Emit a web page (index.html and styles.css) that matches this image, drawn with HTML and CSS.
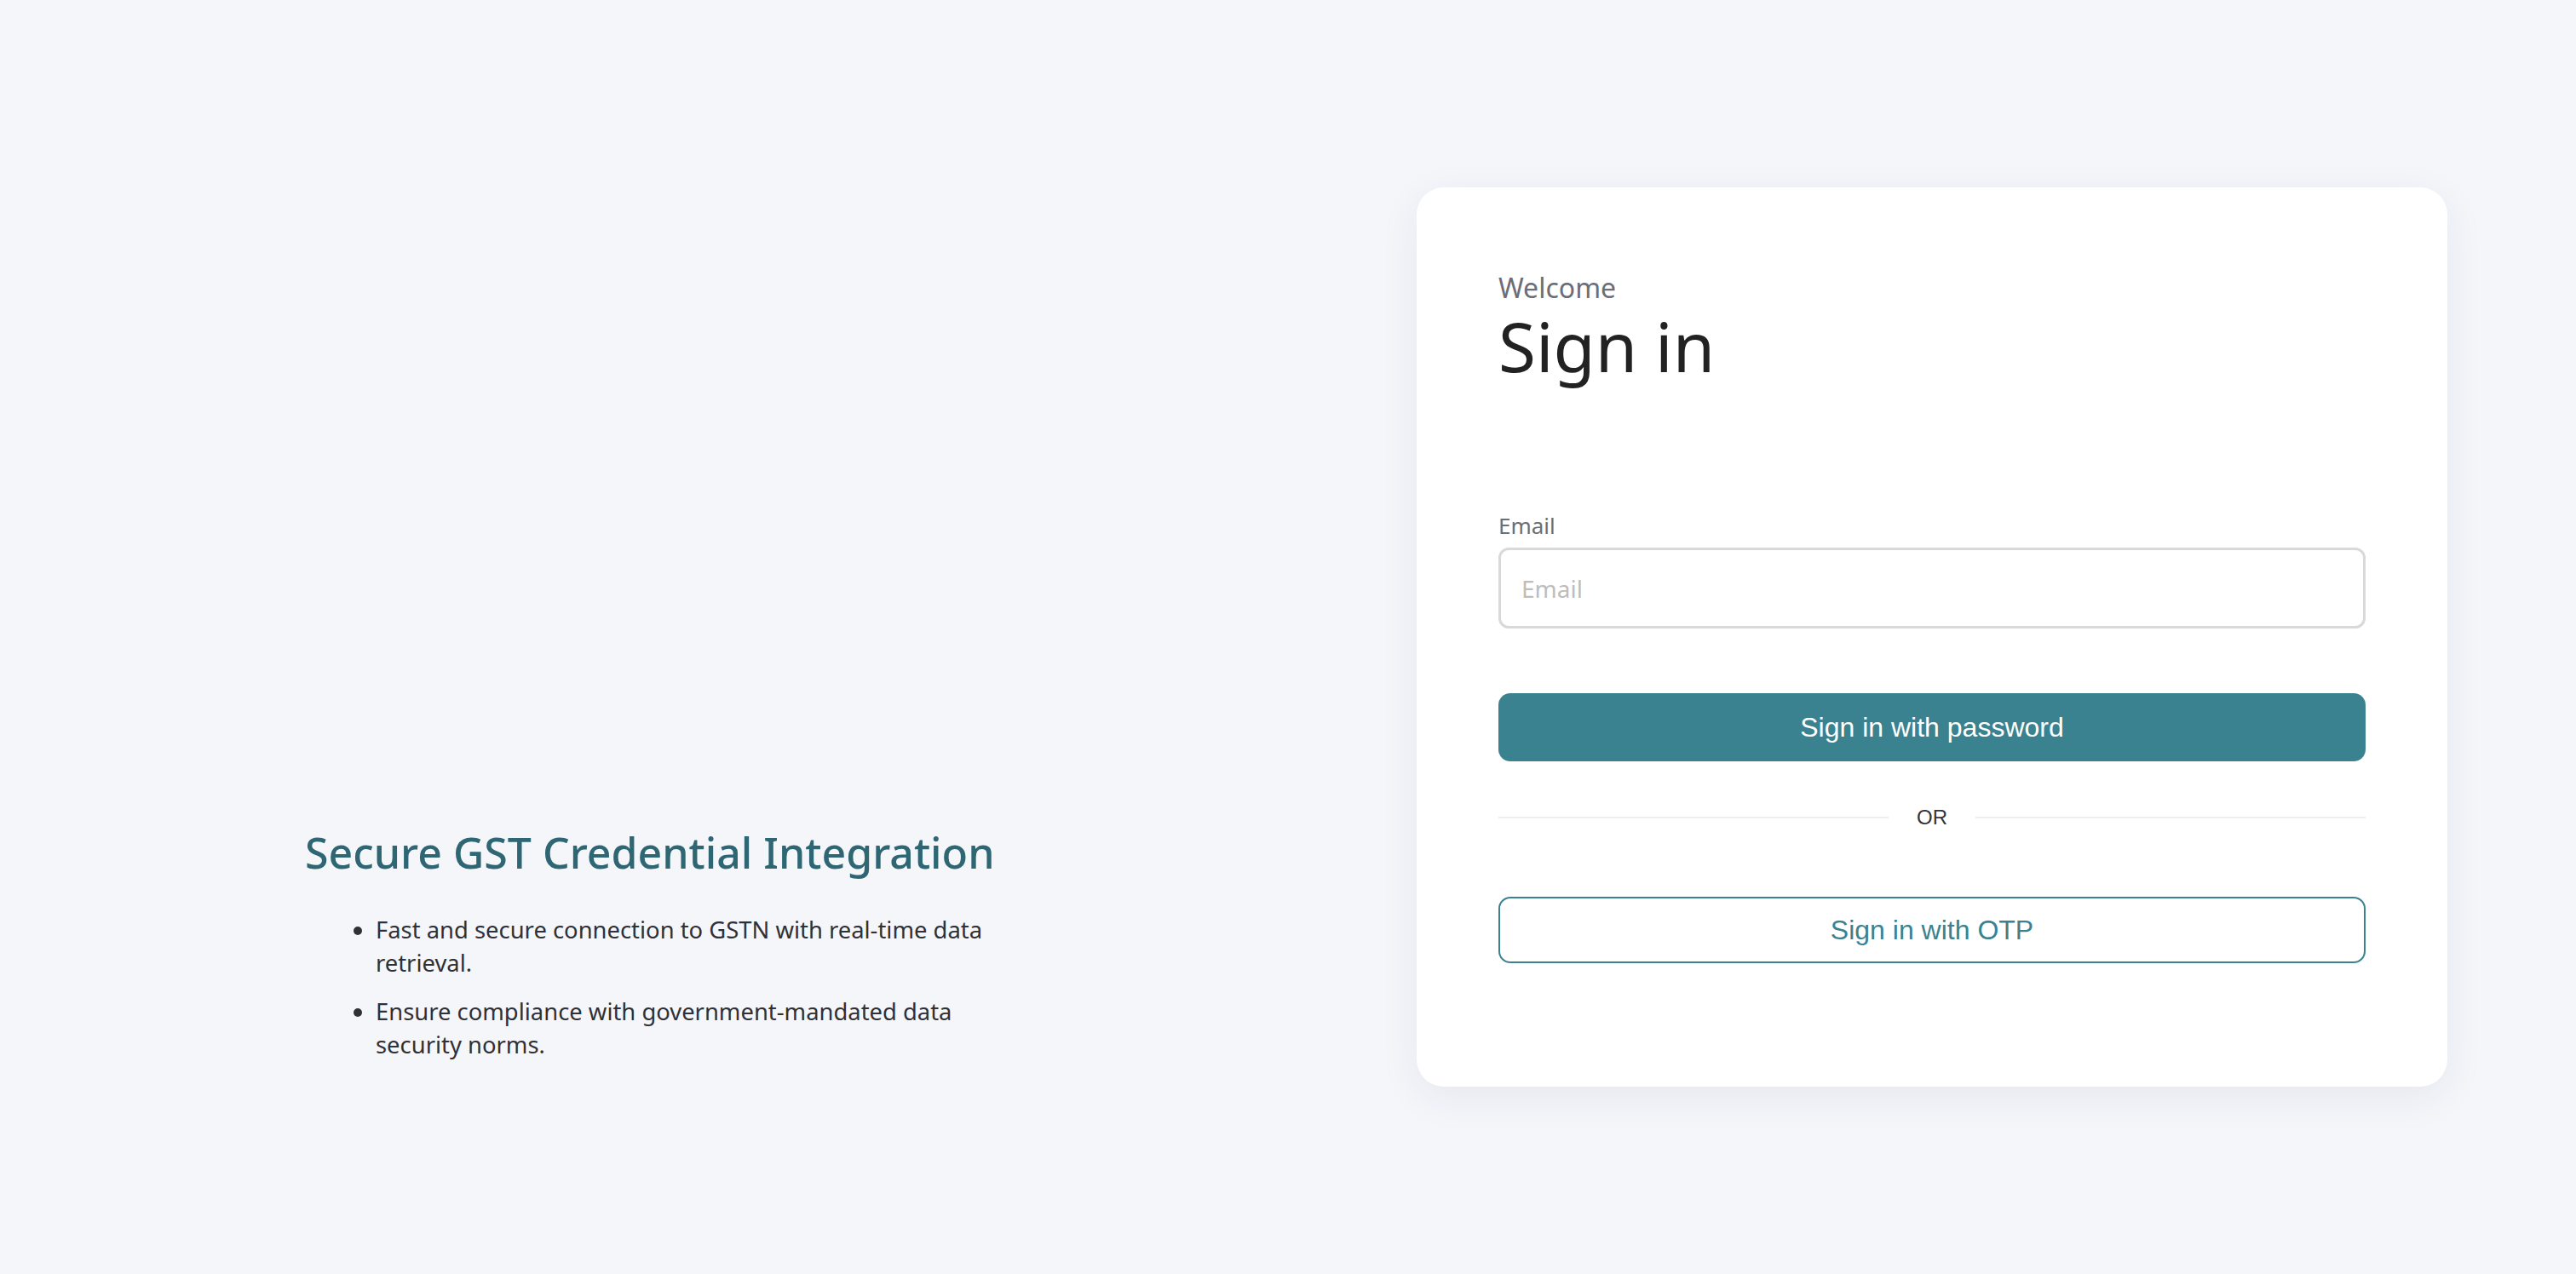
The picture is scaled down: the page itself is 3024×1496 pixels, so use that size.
FILE: index.html
```html
<!DOCTYPE html>
<html lang="en">
<head>
<meta charset="utf-8">
<title>Sign in</title>
<link rel="stylesheet" href="styles.css">
</head>
<body>
<main class="page">
  <section class="intro">
    <div class="intro-block">
      <h2 class="intro-title">Secure GST Credential Integration</h2>
      <ul class="intro-list">
        <li>Fast and secure connection to GSTN with real-time data retrieval.</li>
        <li>Ensure compliance with government-mandated data security norms.</li>
      </ul>
    </div>
  </section>
  <section class="auth">
    <div class="card">
      <div class="welcome">Welcome</div>
      <h1 class="title">Sign in</h1>
      <form class="form">
        <label class="label" for="email">Email</label>
        <input class="input" id="email" type="email" placeholder="Email">
        <button type="button" class="btn btn-primary">Sign in with password</button>
        <div class="divider"><span class="divider-line"></span><span class="divider-text">OR</span><span class="divider-line"></span></div>
        <button type="button" class="btn btn-outline">Sign in with OTP</button>
      </form>
    </div>
  </section>
</main>
</body>
</html>
```

FILE: styles.css
```css
html, body {
  margin: 0;
  padding: 0;
}
body {
  background: #f5f6fa;
  font-family: "Noto Sans", "Open Sans", sans-serif;
  color: #222;
}
.page {
  display: grid;
  grid-template-columns: 1fr 1fr;
  height: 100vh;
}
.intro {
  display: flex;
  flex-direction: column;
  justify-content: flex-end;
  padding: 0 0 250px 358px;
}
.intro-block {
  max-width: 860px;
}
.intro-title {
  margin: 0;
  font-size: 50px;
  font-weight: 500;
  line-height: normal;
  color: #2f6674;
  white-space: nowrap;
}
.intro-list {
  margin: 37px 0 0;
  padding: 0 0 0 83px;
  width: 740px;
  font-size: 27.4px;
  line-height: 39px;
  color: #303136;
}
.intro-list li + li {
  margin-top: 18px;
}
.auth {
  display: flex;
  align-items: center;
  justify-content: center;
}
.card {
  width: 1210px;
  box-sizing: border-box;
  background: #fff;
  border-radius: 32px;
  padding: 96px 96px 145px;
  box-shadow: 0 12px 48px rgba(30, 40, 80, 0.07);
}
.welcome {
  padding-top: 5px;
  font-size: 32px;
  line-height: 34px;
  color: #6b6e76;
}
.title {
  margin: 0;
  padding-top: 11px;
  font-size: 80px;
  font-weight: 400;
  line-height: 80px;
  color: #222;
}
.form {
  display: flex;
  flex-direction: column;
  margin-top: 153px;
}
.label {
  font-size: 26px;
  line-height: normal;
  color: #6b6e76;
  margin-bottom: 8px;
}
.input {
  box-sizing: border-box;
  height: 95px;
  width: 100%;
  border: 3px solid #d9d9d9;
  border-radius: 12px;
  padding: 0 24px;
  font-family: "Noto Sans", "Open Sans", sans-serif;
  font-size: 28px;
  color: #222;
  background: #fff;
  outline: none;
}
.input::placeholder {
  color: #bdbdbd;
}
.btn {
  box-sizing: border-box;
  width: 100%;
  height: 80px;
  border-radius: 14px;
  font-family: "Liberation Sans", Arial, sans-serif;
  font-size: 32px;
  cursor: pointer;
}
.btn-primary {
  margin-top: 76px;
  background: #3b8290;
  color: #fff;
  border: none;
}
.btn-outline {
  margin-top: 79px;
  height: 78px;
  background: #fff;
  color: #3b8290;
  border: 2px solid #3b8290;
}
.divider {
  display: flex;
  align-items: center;
  margin-top: 52px;
  height: 28px;
}
.divider-line {
  flex: 1;
  height: 2px;
  background: #eeeeee;
}
.divider-text {
  padding: 0 33px;
  font-family: "Liberation Sans", Arial, sans-serif;
  font-size: 24px;
  line-height: normal;
  color: #333439;
}
```
